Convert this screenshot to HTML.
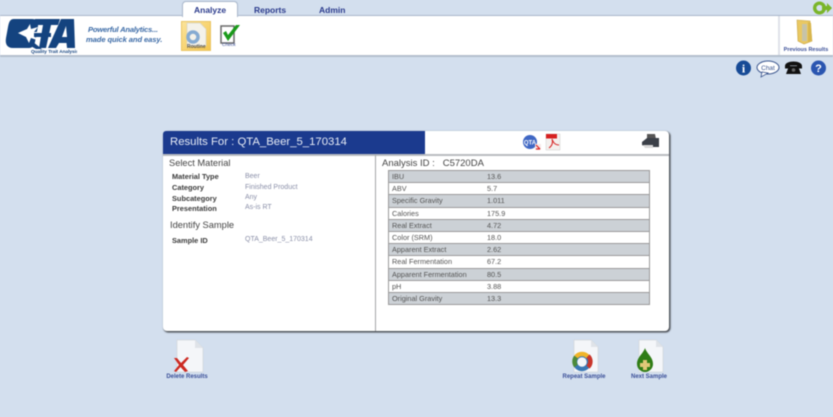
<!DOCTYPE html>
<html><head><meta charset="utf-8">
<style>
*{box-sizing:border-box}
html,body{margin:0;padding:0}
body{width:833px;height:417px;background:#d3dfee;overflow:hidden;position:relative;font-family:"Liberation Sans",sans-serif}
.a{position:absolute;white-space:nowrap}
#wrap{position:absolute;left:0;top:0;width:833px;height:417px;filter:blur(.5px)}
.tab{position:absolute;top:5px;font-size:8.5px;font-weight:bold;color:#2a3a8c}
.lbl{position:absolute;font-size:7.4px;font-weight:bold;color:#3c3c3c;white-space:nowrap}
.val{position:absolute;font-size:7px;color:#8a8fa8;white-space:nowrap}
.h{position:absolute;font-size:9.3px;color:#444;white-space:nowrap}
.cap{position:absolute;font-size:6px;font-weight:bold;color:#3a4f98;white-space:nowrap;transform:translateX(-50%)}
.row{position:absolute;left:388px;width:262px;border:1px solid #9a9a9a;border-bottom:0;font-size:7.3px;color:#555}
.row.g{background:#ccd1d6}
.row.w{background:#fff}
.row span{position:absolute;top:1px;left:3px;white-space:nowrap}
.row b{position:absolute;top:1px;left:98px;font-weight:normal;white-space:nowrap}
</style></head><body>
<div id="wrap">
<!-- toolbar -->
<div class="a" style="left:0;top:15px;width:833px;height:42px;background:#fff;border-top:1.5px solid #a9b7cb;border-bottom:2px solid #b4bfcd"></div>
<div class="a" style="left:182px;top:1px;width:56px;height:16px;background:#fff;border:1px solid #a9b7cb;border-bottom:0;border-radius:4px 4px 0 0"></div>
<div class="tab" style="left:194px">Analyze</div>
<div class="tab" style="left:254px">Reports</div>
<div class="tab" style="left:319px">Admin</div>

<!-- logo -->
<svg class="a" style="left:5px;top:18px" width="72" height="36" viewBox="0 0 72 36">
<path d="M9 1H27C31 1 34 3 33 8L30 24C29 28 27 30 24 30H8C2 30 0 26 1 20L3 9C4 4 5 1 9 1Z" fill="#14437f"/>
<path d="M22 26L31 31 37 31 28 24Z" fill="#14437f"/>
<path d="M13 15L22 11 25 6 26 11 33 9 29 14H34V17H29L32 22 26 20 24 25 21 19Z" fill="#fff"/>
<path d="M30 1H55L53 7H46L41 30H34L38 7H29Z" fill="#14437f"/>
<path d="M29 15H46V19H29Z" fill="#14437f"/>
<path d="M56 1H69L70 30H62L61.500 25H54L51 30H43ZM61 8L57 19H62Z" fill="#14437f"/>
<text x="26" y="35" font-family="Liberation Sans" font-size="4.700" font-weight="bold" fill="#14437f">Quality Trait Analysis</text>
</svg>
<div class="a" style="left:88px;top:24.500px;font-size:7.600px;font-style:italic;font-weight:bold;color:#3b6aa6;letter-spacing:-.2px">Powerful Analytics...</div>
<div class="a" style="left:86px;top:34.500px;font-size:7.600px;font-style:italic;font-weight:bold;color:#3b6aa6;letter-spacing:-.1px">made quick and easy.</div>

<!-- routine button -->
<div class="a" style="left:181px;top:21px;width:30px;height:30px;background:linear-gradient(135deg,#fbe39a,#f5c64e);border:1px solid #eac565"></div>
<svg class="a" style="left:184px;top:22px" width="24" height="26" viewBox="0 0 24 26">
<path d="M3 1H16L22 7V24H3Z" fill="#f4f2ea" stroke="#d8d4c4" stroke-width=".7"/>
<circle cx="9" cy="15" r="5" fill="none" stroke="#86abd2" stroke-width="3.500"/>
</svg>
<div class="a" style="left:187px;top:43.500px;font-size:5px;font-weight:bold;color:#555">Routine</div>
<!-- check -->
<svg class="a" style="left:219px;top:23px" width="24" height="24" viewBox="0 0 24 24">
<rect x="2" y="3" width="13" height="17" fill="#fff" stroke="#6a6a6a" stroke-width="1.500"/>
<path d="M4 10L9 18 21 2 17 2 9 12 7 8Z" fill="#1a9a1a"/>
</svg>
<div class="a" style="left:222px;top:43px;font-size:4.800px;color:#3a4f98">Check</div>

<!-- previous results -->
<div class="a" style="left:778px;top:16px;width:2px;height:39px;background:#dfe3ea"></div>
<svg class="a" style="left:795px;top:19px" width="20" height="26" viewBox="0 0 20 26">
<path d="M2 1L15 2 17 22 9 25 3 22Z" fill="#e9c862" stroke="#c7a545" stroke-width=".6"/>
<path d="M7 5H12V22H7Z" fill="#c6c3a8"/>
<path d="M13 3L16 4 17 21 13 23Z" fill="#d8b64c"/>
</svg>
<div class="cap" style="left:806px;top:47px;font-size:5.500px">Previous Results</div>

<!-- top right green -->
<svg class="a" style="left:812px;top:0" width="21" height="15" viewBox="0 0 21 15">
<circle cx="7.500" cy="8" r="4.800" fill="none" stroke="#7ab52a" stroke-width="3.400"/>
<path d="M10 6H15V3L20 8 15 13V10H10Z" fill="#7ab52a"/>
</svg>

<!-- help row -->
<svg class="a" style="left:735px;top:60px" width="93" height="18" viewBox="0 0 93 18">
<circle cx="8.500" cy="8" r="7.500" fill="#164a96"/>
<text x="8.500" y="12.500" text-anchor="middle" font-family="Liberation Serif" font-weight="bold" font-size="12" fill="#fff">i</text>
<ellipse cx="33" cy="7.500" rx="11" ry="6.500" fill="#fff" stroke="#3b568e" stroke-width="1"/>
<path d="M27 12L26 17 33 13Z" fill="#fff" stroke="#3b568e" stroke-width=".8"/>
<text x="33" y="10" text-anchor="middle" font-family="Liberation Sans" font-size="6.500" fill="#3b568e">Chat</text>
<path d="M50 6C50 0 67 0 67 6V8.500H62V5.500H55V8.500H50Z" fill="#111"/>
<path d="M54 6H63L66 14H51Z" fill="#111"/>
<circle cx="58.500" cy="10" r="1.800" fill="#666"/>
<circle cx="83.500" cy="8" r="7.500" fill="#2a55b0"/>
<text x="83.500" y="12" text-anchor="middle" font-family="Liberation Sans" font-weight="bold" font-size="11" fill="#fff">?</text>
</svg>

<!-- card -->
<div class="a" style="left:163px;top:131px;width:506px;height:200px;background:#fff;border-radius:4px;box-shadow:1px 1px 1.500px .5px #45494f"></div>
<div class="a" style="left:163px;top:131px;width:262px;height:23px;background:#1b3a8e;border-radius:3px 0 0 0"></div>
<div class="a" style="left:170px;top:136px;font-size:11.350px;color:#e6ebf5">Results For : QTA_Beer_5_170314</div>
<div class="a" style="left:163px;top:154px;width:506px;height:1.500px;background:#b9bcc0"></div>
<div class="a" style="left:375px;top:155px;width:1px;height:176px;background:#a4a6a8"></div>

<!-- card icons -->
<svg class="a" style="left:522px;top:133px" width="42" height="18" viewBox="0 0 42 18">
<circle cx="8" cy="9" r="7" fill="#3f67c4"/>
<text x="8" y="11.500" text-anchor="middle" font-family="Liberation Sans" font-size="6" font-weight="bold" fill="#fff">QTA</text>
<rect x="13" y="11" width="6" height="6" fill="#f6e8e8"/>
<path d="M14 12L18 16M14 16H18" stroke="#d22" stroke-width="1.200"/>
<path d="M24 1H38V17H24Z" fill="#f4f0ee" stroke="#ccc" stroke-width=".5"/>
<rect x="24" y="1" width="11" height="4.500" fill="#d62020"/>
<path d="M27 15C31 12 31 9 30 6 32 11 34 12 37 12" fill="none" stroke="#d62020" stroke-width="1"/>
</svg>
<svg class="a" style="left:641px;top:133px" width="20" height="17" viewBox="0 0 20 17">
<path d="M6 1H14L15 6H6Z" fill="#555"/>
<path d="M1 9L6 5H18V14H5L1 12Z" fill="#3b4048"/>
<path d="M2 12H12V15H4Z" fill="#d8d8d8"/>
</svg>

<!-- left column -->
<div class="h" style="left:169px;top:157.500px">Select Material</div>
<div class="lbl" style="left:172px;top:172px">Material Type</div><div class="val" style="left:245px;top:172.500px">Beer</div>
<div class="lbl" style="left:172px;top:183px">Category</div><div class="val" style="left:245px;top:183.500px">Finished Product</div>
<div class="lbl" style="left:172px;top:194px">Subcategory</div><div class="val" style="left:245px;top:194px">Any</div>
<div class="lbl" style="left:172px;top:204px">Presentation</div><div class="val" style="left:245px;top:204px">As-is RT</div>
<div class="h" style="left:170px;top:220px">Identify Sample</div>
<div class="lbl" style="left:172px;top:235.500px">Sample ID</div><div class="val" style="left:245px;top:235.500px">QTA_Beer_5_170314</div>

<!-- right column -->
<div class="h" style="left:382px;top:157.500px;font-size:9.500px">Analysis ID :&nbsp;&nbsp; C5720DA</div>
<div class="row g" style="top:170px;height:12px"><span>IBU</span><b>13.6</b></div>
<div class="row w" style="top:182px;height:12px"><span>ABV</span><b>5.7</b></div>
<div class="row g" style="top:194px;height:13px"><span>Specific Gravity</span><b>1.011</b></div>
<div class="row w" style="top:207px;height:12px"><span>Calories</span><b>175.9</b></div>
<div class="row g" style="top:219px;height:12px"><span>Real Extract</span><b>4.72</b></div>
<div class="row w" style="top:231px;height:12px"><span>Color (SRM)</span><b>18.0</b></div>
<div class="row g" style="top:243px;height:12px"><span>Apparent Extract</span><b>2.62</b></div>
<div class="row w" style="top:255px;height:13px"><span>Real Fermentation</span><b>67.2</b></div>
<div class="row g" style="top:268px;height:12px"><span>Apparent Fermentation</span><b>80.5</b></div>
<div class="row w" style="top:280px;height:12px"><span>pH</span><b>3.88</b></div>
<div class="row g" style="top:292px;height:13px;border-bottom:1px solid #9a9a9a"><span>Original Gravity</span><b>13.3</b></div>

<!-- bottom actions -->
<svg class="a" style="left:172px;top:339px" width="32" height="34" viewBox="0 0 32 34">
<path d="M5 1H23L31 9V33H5Z" fill="#f4f6f9" stroke="#d4d8dd" stroke-width=".8"/>
<path d="M23 1V9H31Z" fill="#dfe3e8"/>
<path d="M2 19L5 19 9 24 15 18 17 19 11 26 16 32 13 33 8.500 28 4 33 2 32 7 26Z" fill="#cc2a22"/>
</svg>
<div class="cap" style="left:187px;top:373.500px">Delete Results</div>

<svg class="a" style="left:570px;top:339px" width="32" height="34" viewBox="0 0 32 34">
<path d="M4 1H21L28 8V33H4Z" fill="#f4f6f9" stroke="#d4d8dd" stroke-width=".8"/>
<path d="M21 1V8H28Z" fill="#dfe3e8"/>
<circle cx="12" cy="23" r="7" fill="none" stroke="#3a78b4" stroke-width="4.500"/>
<path d="M6 18A7.500 7.500 0 0 1 18 18" fill="none" stroke="#f0b429" stroke-width="4.500"/>
<path d="M18 17A7.500 7.500 0 0 1 18 28" fill="none" stroke="#c9352a" stroke-width="4.500"/>
<path d="M6 18A7.500 7.500 0 0 0 6 27" fill="none" stroke="#4c8a3a" stroke-width="4.500"/>
</svg>
<div class="cap" style="left:584px;top:373.500px">Repeat Sample</div>

<svg class="a" style="left:634px;top:339px" width="32" height="34" viewBox="0 0 32 34">
<path d="M5 1H22L29 8V33H5Z" fill="#f4f6f9" stroke="#d4d8dd" stroke-width=".8"/>
<path d="M22 1V8H29Z" fill="#dfe3e8"/>
<path d="M11 9C13 15 19 18 19 25A8 8 0 0 1 3 25C3 18 9 15 11 9Z" fill="#2f7d16"/>
<path d="M9 21H13V24H16V28H13V31H9V28H6V24H9Z" fill="#e0c878"/>
</svg>
<div class="cap" style="left:649px;top:373.500px">Next Sample</div>
</div>
</body></html>
